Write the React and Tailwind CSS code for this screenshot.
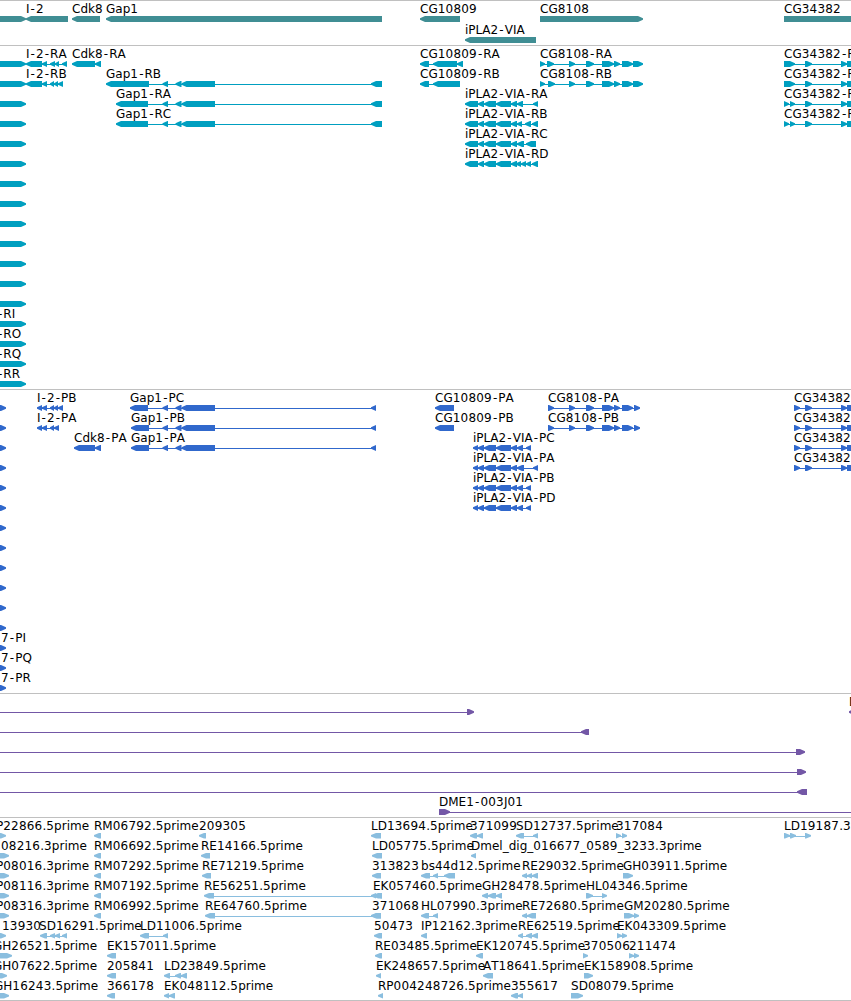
import React from 'react';

const L = 'left';
const R = 'right';

// feature: [row, label, direction, exons, labelX?]
const rows = (count, make) => Array.from({ length: count }, (_, i) => make(i));

const GAP1_MID = [[162.5, 168], [175.5, 181.5], [181.5, 215]];
const IPLA2 = [[465, 478], [478, 484], [484, 496], [496, 511], [511, 517]];
const IPLA2_CDS = [[473, 478], [478, 484], [484, 496], [496, 511], [511, 517]];
const CG8108_MID = [[569, 575], [586, 594], [602, 614], [614, 620], [622, 633]];
const CG34382_END = [[805, 812], [841, 847], [847, 900]];

const hiddenTranscripts = { 13: '-RI', 14: '-RO', 15: '-RQ', 16: '-RR' };
const hiddenProteins = { 12: '7-PI', 13: '7-PQ', 14: '7-PR' };

const TRACKS = [
  {
    id: 'genes',
    box: 'h-[45px]',
    height: 44,
    pitch: 21,
    color: '#408e94',
    features: [
      [0, '', R, [[-20, 26]]],
      [0, 'I-2', L, [[26, 68]]],
      [0, 'Cdk8', L, [[72, 100]]],
      [0, 'Gap1', L, [[106, 382]]],
      [0, 'CG10809', L, [[420, 460]]],
      [1, 'iPLA2-VIA', L, [[465, 536]]],
      [0, 'CG8108', R, [[540, 643]]],
      [0, 'CG34382', R, [[784, 900]]],
    ],
  },
  {
    id: 'transcripts',
    box: 'h-[344px]',
    height: 343,
    pitch: 20,
    color: '#009fc0',
    features: [
      ...rows(17, (i) => [i, hiddenTranscripts[i] ?? '', R, [[-20, 26]], -2]),
      [0, 'I-2-RA', L, [[26, 42], [42, 47], [50, 55], [55, 59], [62, 67]]],
      [1, 'I-2-RB', L, [[26, 42], [42, 47], [50, 54], [54, 58], [58, 63]]],
      [0, 'Cdk8-RA', L, [[72, 95], [95, 101]]],
      [1, 'Gap1-RB', L, [[106, 149], ...GAP1_MID, [371, 382]]],
      [2, 'Gap1-RA', L, [[116, 148], ...GAP1_MID, [371, 382]]],
      [3, 'Gap1-RC', L, [[116, 148], ...GAP1_MID, [371, 382]]],
      [0, 'CG10809-RA', L, [[420, 429], [433, 457], [457, 463]]],
      [1, 'CG10809-RB', L, [[420, 429], [433, 460]]],
      [2, 'iPLA2-VIA-RA', L, [...IPLA2, [517, 523], [533, 538]]],
      [3, 'iPLA2-VIA-RB', L, [...IPLA2, [517, 522], [525, 531], [532, 538]]],
      [4, 'iPLA2-VIA-RC', L, [...IPLA2, [517, 524], [526, 536]]],
      [5, 'iPLA2-VIA-RD', L, [...IPLA2, [516, 521], [521, 526], [526, 531], [532, 538]]],
      [0, 'CG8108-RA', R, [[540, 545], [547, 554], ...CG8108_MID, [633, 643]]],
      [1, 'CG8108-RB', R, [[540, 545], [548, 555], ...CG8108_MID, [633, 643]]],
      [0, 'CG34382-RA', R, [[784, 795], ...CG34382_END]],
      [1, 'CG34382-RB', R, [[784, 795], ...CG34382_END]],
      [2, 'CG34382-RC', R, [[784, 789], [790, 795], ...CG34382_END]],
      [3, 'CG34382-RD', R, [[784, 789], [790, 795], ...CG34382_END]],
    ],
  },
  {
    id: 'proteins',
    box: 'h-[304px]',
    height: 303,
    pitch: 20,
    color: '#3068cc',
    features: [
      ...rows(15, (i) => [i, hiddenProteins[i] ?? '', R, [[0, 6]], 1]),
      [0, 'I-2-PB', L, [[37, 42], [42, 47], [50, 54], [54, 58], [58, 63]]],
      [1, 'I-2-PA', L, [[37, 42], [42, 47], [50, 54], [54, 59]]],
      [2, 'Cdk8-PA', L, [[74, 95], [95, 101]]],
      [0, 'Gap1-PC', L, [[130, 148], ...GAP1_MID, [371, 376]]],
      [1, 'Gap1-PB', L, [[131, 149], ...GAP1_MID, [371, 376]]],
      [2, 'Gap1-PA', L, [[131, 149], ...GAP1_MID, [371, 376]]],
      [0, 'CG10809-PA', L, [[435, 454]]],
      [1, 'CG10809-PB', L, [[435, 454]]],
      [2, 'iPLA2-VIA-PC', L, [...IPLA2_CDS, [517, 523], [526, 531]]],
      [3, 'iPLA2-VIA-PA', L, [...IPLA2_CDS, [517, 524], [533, 538]]],
      [4, 'iPLA2-VIA-PB', L, [...IPLA2_CDS, [517, 523], [526, 531]]],
      [5, 'iPLA2-VIA-PD', L, [...IPLA2_CDS, [517, 523], [526, 531]]],
      [0, 'CG8108-PA', R, [[548, 554], ...CG8108_MID, [634, 640]]],
      [1, 'CG8108-PB', R, [[548, 554], ...CG8108_MID, [634, 640]]],
      ...rows(4, (i) => [i, 'CG34382', R, [[794, 800], ...CG34382_END]]),
    ],
  },
  {
    id: 'bacs',
    box: 'h-[124px]',
    height: 123,
    pitch: 20,
    color: '#7357a6',
    features: [
      [0, '', R, [[-20, -10], [467, 474]]],
      [1, '', L, [[-20, -10], [581, 589]]],
      [2, '', R, [[-20, -10], [796, 805]]],
      [3, '', R, [[-20, -10], [797, 806]]],
      [4, '', L, [[-20, -10], [797, 807]]],
      [5, 'DME1-003J01', R, [[439, 450], [900, 910]]],
      [0, 'D', L, [[849, 860]]],
    ],
  },
  {
    id: 'ests',
    box: 'h-[183px]',
    height: 182,
    pitch: 20,
    color: '#8abedf',
    features: [
      [0, 'P22866.5prime', R, [[-10, 6]], -4],
      [1, '08216.3prime', R, [[-10, 9]], 1],
      [2, 'P08016.3prime', R, [[-10, 9]], -4],
      [3, 'P08116.3prime', R, [[-10, 9]], -4],
      [4, 'P08316.3prime', R, [[-10, 9]], -4],
      [5, '13930', R, [[-10, 6]], 2],
      [6, 'GH26521.5prime', R, [[-10, 12]], -7],
      [7, 'GH07622.5prime', R, [[-10, 7]], -7],
      [8, 'GH16243.5prime', R, [[-10, 9]], -6],
      [0, 'RM06792.5prime', L, [[94, 101]]],
      [1, 'RM06692.5prime', L, [[94, 101]]],
      [2, 'RM07292.5prime', L, [[94, 101]]],
      [3, 'RM07192.5prime', L, [[94, 101]]],
      [4, 'RM06992.5prime', L, [[94, 101]]],
      [5, 'SD16291.5prime', L, [[40, 47], [50, 55], [55, 60], [62, 67]], 39],
      [5, 'LD11006.5prime', L, [[140, 149], [163, 168]]],
      [6, 'EK157011.5prime', L, [[107, 116]]],
      [7, '205841', L, [[107, 116]]],
      [8, '366178', L, [[107, 115]]],
      [7, 'LD23849.5prime', L, [[164, 170], [175, 181], [181, 187]]],
      [8, 'EK048112.5prime', L, [[164, 169], [169, 175]]],
      [0, '209305', L, [[199, 206]]],
      [1, 'RE14166.5prime', L, [[201, 210]]],
      [2, 'RE71219.5prime', L, [[202, 211]]],
      [3, 'RE56251.5prime', L, [[204, 214], [371, 376], [376, 382]]],
      [4, 'RE64760.5prime', L, [[205, 215], [371, 381]]],
      [0, 'LD13694.5prime', L, [[371, 381]]],
      [1, 'LD05775.5prime', L, [[372, 382]]],
      [2, '313823', L, [[372, 381]]],
      [3, 'EK057460.5prime', L, [[373, 382]]],
      [4, '371068', L, [[372, 381]]],
      [5, '50473', L, [[374, 382]]],
      [6, 'RE03485.5prime', L, [[375, 382]]],
      [7, 'EK248657.5prime', L, [[376, 381]]],
      [8, 'RP004248726.5prime', L, [[378, 383]]],
      [0, '371099', L, [[470, 477], [477, 483]]],
      [1, 'Dmel_dig_016677_0589_3233.3prime', L, [[471, 476]]],
      [2, 'bs44d12.5prime', L, [[421, 430], [433, 438], [444, 455]]],
      [3, 'GH28478.5prime', L, [[482, 488], [488, 496], [496, 502]]],
      [4, 'HL07990.3prime', L, [[421, 429], [433, 438]]],
      [5, 'IP12162.3prime', L, [[421, 427]]],
      [6, 'EK120745.5prime', L, [[476, 483]]],
      [7, 'AT18641.5prime', L, [[483, 493]]],
      [8, '355617', L, [[511, 518], [518, 523]]],
      [0, 'SD12737.5prime', L, [[516, 524], [533, 538]]],
      [2, 'RE29032.5prime', L, [[522, 527], [527, 532], [532, 538]]],
      [4, 'RE72680.5prime', L, [[522, 527], [527, 536]]],
      [5, 'RE62519.5prime', L, [[518, 523], [526, 532], [532, 538]]],
      [0, '317084', R, [[616, 621], [622, 627]]],
      [2, 'GH03911.5prime', R, [[623, 633]]],
      [3, 'HL04346.5prime', R, [[586, 593], [602, 607]]],
      [4, 'GM20280.5prime', R, [[624, 634], [634, 639]]],
      [5, 'EK043309.5prime', R, [[617, 622], [622, 627]]],
      [6, '370506', R, [[583, 588]]],
      [6, '211474', R, [[629, 634], [634, 639]]],
      [7, 'EK158908.5prime', R, [[584, 593]]],
      [8, 'SD08079.5prime', R, [[571, 583]]],
      [0, 'LD19187.3', R, [[784, 790], [790, 796], [805, 811]]],
    ],
  },
];

function exonPoints([start, end], dir, y, h) {
  const tip = Math.min(5, end - start);
  const mid = y + h / 2;
  const [nose, neck, tail] = dir === L ? [start, start + tip, end] : [end, end - tip, start];
  return [
    [nose, mid - 0.8],
    [neck, y],
    [tail, y],
    [tail, y + h],
    [neck, y + h],
    [nose, mid + 0.8],
  ].join(' ');
}

// extra advance around hyphens and after digits
function labelSpacing(label) {
  return [...label]
    .map((ch, i) => {
      const prev = label[i - 1] ?? '';
      let dx = 0;
      if (ch === '-' && i > 0) dx += 1;
      if (prev === '-') dx += 1;
      if (/\d/.test(prev)) dx += 0.2;
      return dx;
    })
    .join(' ');
}

function Feature({ feature, pitch, barHeight }) {
  const [row, label, dir, exons, labelX] = feature;
  const y = 15 + row * pitch;
  const first = exons[0][0];
  const last = exons[exons.length - 1][1];
  return (
    <g>
      {exons.length > 1 && <rect x={first + 1} y={y + 3} width={last - first - 2} height={1} />}
      {exons.map((exon) => (
        <polygon key={exon[0]} points={exonPoints(exon, dir, y, barHeight)} />
      ))}
      {label && (
        <text x={labelX ?? first} y={y - 3} dx={labelSpacing(label)} fill="#000">
          {label}
        </text>
      )}
    </g>
  );
}

function Track({ track }) {
  return (
    <section className={`${track.box} w-full shrink-0 border-t border-[#c0c0c0]`}>
      <svg
        width="851"
        height={track.height}
        fill={track.color}
        className="block overflow-hidden font-['DejaVu_Sans',sans-serif] text-[12px] [font-kerning:none]"
      >
        {track.features.map((feature, i) => (
          <Feature key={i} feature={feature} pitch={track.pitch} barHeight={track.id === 'ests' ? 5.5 : 6} />
        ))}
      </svg>
    </section>
  );
}

export default function App() {
  return (
    <main className="flex h-[1001px] w-[851px] flex-col overflow-hidden border-b border-[#c0c0c0] bg-white">
      {TRACKS.map((track) => (
        <Track key={track.id} track={track} />
      ))}
    </main>
  );
}
